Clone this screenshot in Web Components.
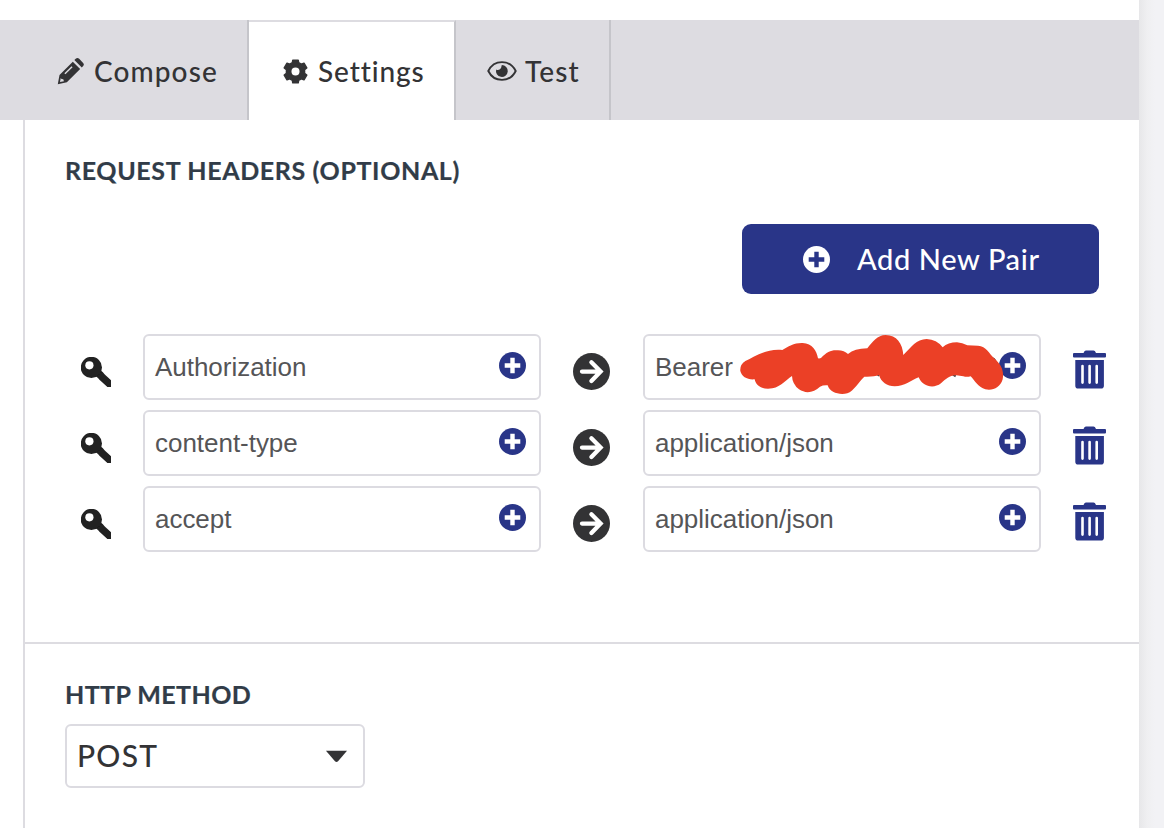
<!DOCTYPE html>
<html lang="en">
<head>
<meta charset="utf-8">
<title>Webhook settings</title>
<style>
html,body{margin:0;height:100%;overflow:hidden;background:#fff}
body{font-family:Lato,"Open Sans",sans-serif;color:#333335}
</style>
</head>
<body>
<webhook-page></webhook-page>
<script>
const icons = {
  pencil: ['0 0 28 28', '<path d="M2.6 17.6 16.4 3.8l7.6 7.6L10.2 25.2.8 27.2ZM18 2.2l1.4-1.3q1.7-1.6 3.6 0l3.9 3.9q1.8 1.8.2 3.5L25.7 9.8Z" fill="currentColor"/><path d="M3.9 20.8 3.1 24.9l4.1-.9-.7-1.9-1.8-.2Z" fill="var(--cut)"/><path d="m8.2 16.4 7.4-7.4" stroke="var(--cut)" stroke-width="1.5"/>'],
  gear: ['0 0 26 26', '<path fill="currentColor" stroke="currentColor" stroke-linejoin="round" stroke-width="1.6" fill-rule="evenodd" d="M10.2 1.2h5.6l.4 2.6 2.8 1.6 2.8-1 2.9 4.9-2.3 1.9v3.6l2.3 1.9-2.9 4.9-2.8-1-2.8 1.6-.4 2.6h-5.6l-.4-2.6L7 20.6l-2.8 1-2.9-4.9 2.3-1.9v-3.6L1.3 9.3l2.9-4.9 2.8 1 2.8-1.6ZM13 8a5 5 0 1 0 0 10 5 5 0 1 0 0-10Z"/>'],
  eye: ['0 0 30 20', '<path d="M1.3 10C7-1.8 23-1.8 28.7 10 23 21.8 7 21.8 1.3 10Z" fill="none" stroke="currentColor" stroke-width="1.9"/><path d="M14.8 4.1A5.9 5.9 0 1 1 9.2 8.4Q10.8 9.4 12.6 8.5 14.6 7.2 14.8 4.1Z" fill="currentColor"/>'],
  plus: ['0 0 27 27', '<circle cx="13.5" cy="13.5" r="13.5" fill="currentColor"/><path d="M13.5 5.7v15.6M5.7 13.5h15.6" stroke="var(--cut)" stroke-width="4.4"/>'],
  arrow: ['0 0 37 37', '<circle cx="18.5" cy="18.5" r="18.5" fill="currentColor"/><path d="M9 18.6H27M18.4 9.2l9.2 9.4-9.2 9.4" fill="none" stroke="#fff" stroke-width="4.3" stroke-linecap="round" stroke-linejoin="miter"/>'],
  trash: ['0 0 33 39', '<path fill="currentColor" fill-rule="evenodd" d="M1 2.9h9.5Q11.5.5 13 .5h7.5q1.5 0 2.5 2.4h9q1 0 1 1v2.6q0 1-1 1H1q-1 0-1-1V3.9q0-1 1-1ZM2.3 10h28.6v25.7q0 2.8-2.8 2.8h-23q-2.8 0-2.8-2.8ZM8.2 16v16.6q0 1.3 1.3 1.3t1.3-1.3V16q0-1.3-1.3-1.3T8.2 16Zm7.1 0v16.6q0 1.3 1.3 1.3t1.3-1.3V16q0-1.3-1.3-1.3T15.3 16Zm7.1 0v16.6q0 1.3 1.3 1.3t1.3-1.3V16q0-1.3-1.3-1.3T22.4 16Z"/>'],
  key: ['0 0 30 30', '<g filter="url(#soft)"><path d="M13 15q5 .5 8 5l12 11" stroke="#202020" stroke-width="7.4" fill="none"/><circle cx="10.4" cy="10.4" r="10.6" fill="#202020"/><circle cx="8.4" cy="8.3" r="4.1" fill="#fff"/></g><defs><filter id="soft" x="-30%" y="-30%" width="160%" height="160%"><feGaussianBlur stdDeviation=".7"/></filter></defs>'],
  caret: ['0 0 24 13', '<path d="M1 .7h22L13.6 11.2q-1.6 1.6-3.2 0Z" fill="currentColor"/>']
};

class UiIcon extends HTMLElement {
  connectedCallback() {
    const [box, body] = icons[this.getAttribute('name')];
    this.attachShadow({mode: 'open'}).innerHTML =
      `<style>:host{display:block;flex:none}svg{display:block;width:100%;height:100%}</style><svg viewBox="${box}" preserveAspectRatio="none">${body}</svg>`;
  }
}
customElements.define('ui-icon', UiIcon);

class TabItem extends HTMLElement {
  connectedCallback() {
    this.attachShadow({mode: 'open'}).innerHTML = `<style>
      :host{display:flex;box-sizing:border-box;height:100px;border-right:2px solid #c5c5ca;font-size:28px;line-height:36px;font-weight:500;white-space:nowrap;padding-top:33px;--cut:#dddce1;letter-spacing:var(--ls)}
      :host([active]){background:#fff;border-top:2px solid #dddce1;padding-top:31px}
      span{display:block}</style><slot name="icon"></slot><span><slot></slot></span>`;
  }
}
customElements.define('tab-item', TabItem);

class PairField extends HTMLElement {
  connectedCallback() {
    this.attachShadow({mode: 'open'}).innerHTML = `<style>
      :host{display:flex;box-sizing:border-box;width:398px;height:66px;border:2px solid #dcdbe1;border-radius:6px;background:#fff;padding:0 13px 0 10px;justify-content:space-between;align-items:center;position:relative;font:26px/30px "Liberation Sans",Arial,sans-serif;letter-spacing:-.03px;color:#555557}
      ui-icon{width:27px;height:27px;color:#293588;--cut:#fff;margin-bottom:3px}</style>
      <span><slot></slot></span><ui-icon name="plus"></ui-icon><slot name="cover"></slot>`;
  }
}
customElements.define('pair-field', PairField);

class RedactionMark extends HTMLElement {
  connectedCallback() {
    this.attachShadow({mode: 'open'}).innerHTML = `<style>
      :host{display:block;position:absolute;left:75px;top:-11px;width:330px;height:80px}svg{display:block;width:100%;height:100%}</style>
      <svg viewBox="0 0 990 240"><path d="M807 101q14-5 19 7M695 146l12 8M472 148l6 4" fill="none" stroke="#47484c" stroke-width="6"/>
      <path fill="#eb4026" d="M76 108C105 95 139 70 187 75C205 64 223 53 248 54C277 56 290 76 294 100Q299 101 303 99C321 80 335 74 354 76Q373 77 384 87Q403 71 442 70C458 50 472 30 497 30C530 30 548 56 550 90C574 66 589 43 620 42Q650 43 668 67Q684 52 711 52Q727 53 742 61L774 62C799 63 807 86 824 101C843 119 853 136 848 163C841 187 819 198 796 193C775 187 765 168 752 154Q740 157 730 154L709 151C692 149 677 162 663 175C640 193 607 184 596 157C572 167 554 184 524 184C501 183 483 171 477 150Q462 156 433 155C417 169 402 198 382 205C359 211 329 203 323 181Q309 180 300 185C282 203 257 207 237 193Q217 178 216 153C198 164 185 184 157 190C129 196 107 182 104 163C82 165 65 155 61 138Q59 119 76 108Z"/></svg>`;
  }
}
customElements.define('redaction-mark', RedactionMark);

class HeaderPair extends HTMLElement {
  connectedCallback() {
    this.attachShadow({mode: 'open'}).innerHTML = `<style>
      :host{display:flex;height:66px;padding-left:56px}
      .key{width:30px;height:30px;margin:23px 32px 0 0}
      .arrow{width:37px;height:37px;margin:19px 33px 0 32px;color:#333335}
      .trash{width:33px;height:39px;margin:16px 0 0 32px;color:#293588}</style>
      <ui-icon class="key" name="key"></ui-icon>
      <pair-field>${this.getAttribute('key')}</pair-field>
      <ui-icon class="arrow" name="arrow"></ui-icon>
      <pair-field>${this.getAttribute('value')}${this.hasAttribute('redacted') ? '<redaction-mark slot="cover"></redaction-mark>' : ''}</pair-field>
      <ui-icon class="trash" name="trash"></ui-icon>`;
  }
}
customElements.define('header-pair', HeaderPair);

class ActionButton extends HTMLElement {
  connectedCallback() {
    this.attachShadow({mode: 'open'}).innerHTML = `<style>
      :host{display:flex;box-sizing:border-box;width:357px;height:70px;border-radius:9px;background:#293588;color:#fff;padding:0 0 0 61px;align-items:center;gap:27px;font-size:29px;line-height:36px;font-weight:500;white-space:nowrap;letter-spacing:.62px}
      ui-icon{width:27px;height:27px;--cut:#293588}</style><ui-icon name="plus"></ui-icon><span><slot></slot></span>`;
  }
}
customElements.define('action-button', ActionButton);

class SelectBox extends HTMLElement {
  connectedCallback() {
    this.attachShadow({mode: 'open'}).innerHTML = `<style>
      :host{display:flex;box-sizing:border-box;width:300px;height:64px;border:2px solid #dcdbe1;border-radius:6px;padding:0 15px 0 10px;align-items:center;justify-content:space-between;font-size:30px;line-height:36px;font-weight:500;letter-spacing:1.2px}
      span{padding-bottom:3px}ui-icon{width:23px;height:13px;color:#333335}</style><span><slot></slot></span><ui-icon name="caret"></ui-icon>`;
  }
}
customElements.define('select-box', SelectBox);

class WebhookPage extends HTMLElement {
  connectedCallback() {
    this.attachShadow({mode: 'open'}).innerHTML = `<style>
      :host{display:flex;height:828px;width:1164px}
      main{width:1139px;padding-top:20px;box-sizing:border-box}
      aside{flex:1;background:linear-gradient(90deg,#e7e7e9,#efeff1 8px,#f2f2f5 16px)}
      nav{display:flex;height:100px;background:#dddce1}
      .panel{margin-left:23px;border-left:2px solid #dddce1;height:708px}
      h2{margin:0;font-size:25px;line-height:30px;font-weight:700;color:#313c48;white-space:nowrap;-webkit-text-stroke:.2px currentColor}
      .headers{box-sizing:border-box;height:524px;border-bottom:2px solid #dddce1;padding-top:35px}
      .headers h2,.method h2{padding-left:40px}
      .button-row{display:flex;justify-content:flex-end;padding:39px 40px 40px 0}
      .rows{display:flex;flex-direction:column;gap:10px}
      .method{padding-top:35px}
      select-box{margin:15px 0 0 40px}
      .t1{width:249px;padding-left:57px;--ls:1.1px}.t2{width:207px;padding-left:34px;--ls:.9px}.t3{width:155px;padding-left:31px;--ls:1.1px}
      .t1 ui-icon{width:27px;height:27px;margin:5px 10px 0 0}
      .t2 ui-icon{width:25px;height:25px;margin:6px 10px 0 0}
      .t3 ui-icon{width:30px;height:20px;margin:8px 8px 0 0}
      .h1{letter-spacing:.63px}.h2{letter-spacing:.42px}
    </style>
    <main>
      <nav>
        <tab-item class="t1"><ui-icon slot="icon" name="pencil"></ui-icon>Compose</tab-item>
        <tab-item class="t2" active><ui-icon slot="icon" name="gear"></ui-icon>Settings</tab-item>
        <tab-item class="t3"><ui-icon slot="icon" name="eye"></ui-icon>Test</tab-item>
      </nav>
      <div class="panel">
        <section class="headers">
          <h2 class="h1">REQUEST HEADERS (OPTIONAL)</h2>
          <div class="button-row"><action-button>Add New Pair</action-button></div>
          <div class="rows">
            <header-pair key="Authorization" value="Bearer" redacted></header-pair>
            <header-pair key="content-type" value="application/json"></header-pair>
            <header-pair key="accept" value="application/json"></header-pair>
          </div>
        </section>
        <section class="method"><h2 class="h2">HTTP METHOD</h2><select-box>POST</select-box></section>
      </div>
    </main><aside></aside>`;
  }
}
customElements.define('webhook-page', WebhookPage);
</script>
</body>
</html>
